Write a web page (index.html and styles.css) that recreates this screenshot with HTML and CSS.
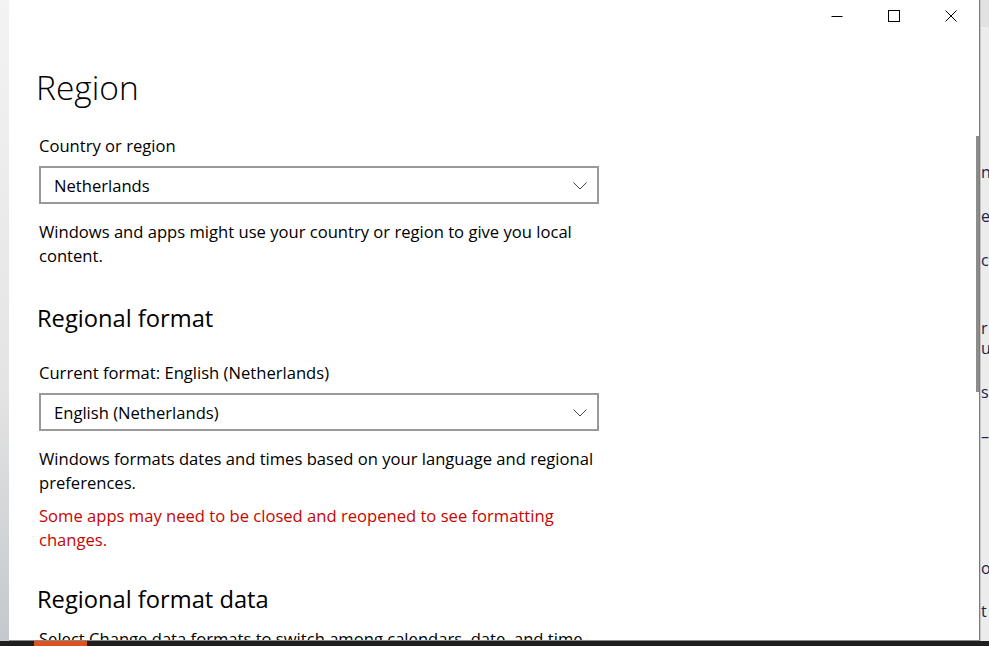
FILE: index.html
```html
<!DOCTYPE html>
<html lang="en">
<head>
    <meta charset="UTF-8">
    <meta name="viewport" content="width=device-width, initial-scale=1.0">
    <title>Region</title>
    <link rel="stylesheet" href="styles.css">
</head>
<body>
    <div class="screen">
        <div class="desk-left"></div>
        <div class="window">
            <div class="titlebar">
                <button class="caption-btn" title="Minimize">
                    <svg width="12" height="12" viewBox="0 0 12 12"><path d="M0.5 6.5h11" stroke="#000" stroke-width="1"/></svg>
                </button>
                <button class="caption-btn" title="Maximize">
                    <svg width="12" height="12" viewBox="0 0 12 12"><rect x="0.5" y="0.5" width="11" height="11" fill="none" stroke="#000" stroke-width="1"/></svg>
                </button>
                <button class="caption-btn" title="Close">
                    <svg width="12" height="12" viewBox="0 0 12 12"><path d="M0.5 0.5l11 11M11.5 0.5l-11 11" stroke="#000" stroke-width="1"/></svg>
                </button>
            </div>
            <div class="content">
                <h1>Region</h1>

                <div class="field-label">Country or region</div>
                <div class="combo">
                    <span>Netherlands</span>
                    <svg width="14" height="8" viewBox="0 0 14 8"><path d="M0.5 0.5l6.5 6.5l6.5-6.5" fill="none" stroke="#444" stroke-width="1"/></svg>
                </div>
                <p class="desc">Windows and apps might use your country or region to give you local content.</p>

                <h2>Regional format</h2>
                <div class="field-label">Current format: English (Netherlands)</div>
                <div class="combo">
                    <span>English (Netherlands)</span>
                    <svg width="14" height="8" viewBox="0 0 14 8"><path d="M0.5 0.5l6.5 6.5l6.5-6.5" fill="none" stroke="#444" stroke-width="1"/></svg>
                </div>
                <p class="desc">Windows formats dates and times based on your language and regional preferences.</p>
                <p class="desc warn">Some apps may need to be closed and reopened to see formatting changes.</p>

                <h2 class="data-head">Regional format data</h2>
                <p class="desc cut">Select Change data formats to switch among calendars, date, and time formats.</p>
            </div>
            <div class="scrollbar"></div>
        </div>
        <div class="desk-right">
            <div class="peek" style="margin-top: 162px">n</div>
            <div class="peek" style="margin-top: 24px">e</div>
            <div class="peek" style="margin-top: 24px">c</div>
            <div class="peek" style="margin-top: 48px">r</div>
            <div class="peek">u</div>
            <div class="peek" style="margin-top: 24px">s</div>
            <div class="peek" style="margin-top: 24px">–</div>
            <div class="peek" style="margin-top: 112px">o</div>
            <div class="peek" style="margin-top: 23px">t</div>
        </div>
    </div>
    <div class="taskbar">
        <div class="task-active"></div>
    </div>
</body>
</html>
```

FILE: styles.css
```css
body {
    margin: 0;
    padding: 0;
    width: 989px;
    height: 646px;
    overflow: hidden;
    font-family: 'Open Sans', 'Noto Sans', sans-serif;
    color: #000;
    background: #ececec;
}
.screen {
    display: flex;
    height: 641px;
}
.desk-left {
    width: 9px;
    background: linear-gradient(#f3f3f3, #e4e4e4 60%, #c4c8cc);
}
.window {
    position: relative;
    width: 971px;
    background: #fff;
    border-right: 1px solid #7c7c7c;
    border-bottom: 1px solid #8a8a8a;
    overflow: hidden;
}
.titlebar {
    display: flex;
    justify-content: flex-end;
    height: 31px;
}
.caption-btn {
    width: 57px;
    height: 31px;
    border: none;
    background: transparent;
    padding: 0;
    display: flex;
    align-items: center;
    justify-content: center;
}
.content {
    padding-left: 28px;
    width: 560px;
}
h1 {
    margin: 34px 0 0 -1px;
    font-size: 33.5px;
    font-weight: 300;
    line-height: 44px;
}
h2 {
    margin: 34px 0 0 0;
    font-size: 23.7px;
    font-weight: 400;
    line-height: 32px;
}
.field-label {
    margin-top: 25px;
    margin-left: 2px;
    font-size: 16.6px;
    line-height: 24px;
}
h2 + .field-label {
    margin-top: 27px;
}
.combo {
    margin: 8px 0 0 2px;
    height: 34px;
    border: 2px solid #999;
    display: flex;
    align-items: center;
    justify-content: space-between;
    padding: 0 10px 0 13px;
    width: 533px;
    font-size: 16.6px;
}
.combo svg {
    margin-top: 1px;
}
.desc {
    margin: 16px 0 0 2px;
    font-size: 16.6px;
    line-height: 24px;
}
.warn {
    margin-top: 9px;
    color: #c50500;
}
.data-head {
    margin-top: 31px;
}
.cut {
    margin-top: 12px;
}
.scrollbar {
    position: absolute;
    top: 136px;
    right: 0;
    width: 3px;
    height: 256px;
    background: #8c8c8c;
}
.desk-right {
    width: 8px;
    background: linear-gradient(#e2e2e2, #e2e2e2 27px, #f4f4f4 28px, #ececec 29px);
    border-left: 1px solid #c8c8c8;
    overflow: hidden;
}
.peek {
    font-size: 16px;
    line-height: 20px;
    color: #14254f;
}
.taskbar {
    height: 5px;
    background: #1f1f1f;
}
.task-active {
    margin-left: 34px;
    width: 53px;
    height: 5px;
    background: #e0521d;
}
```
